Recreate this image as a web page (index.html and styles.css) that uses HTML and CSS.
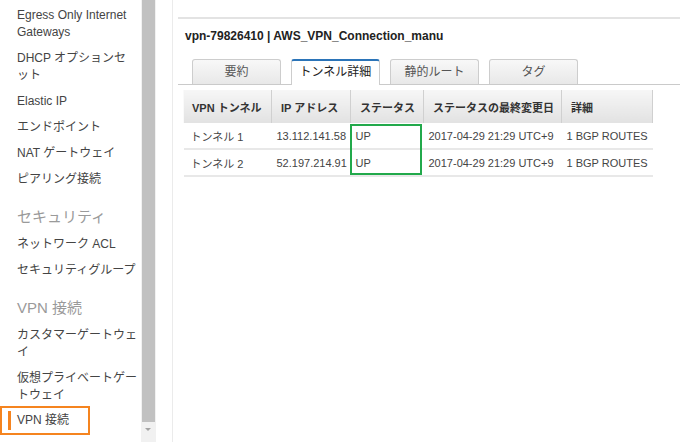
FILE: index.html
```html
<!DOCTYPE html>
<html>
<head>
  <title>VPN 接続</title>
  <link rel="stylesheet" href="styles.css">
</head>
<body>
  <div class="page">
    <aside class="sidebar">
      <nav class="side-nav">
        <div class="nav-item">Egress Only Internet Gateways</div>
        <div class="nav-item">DHCP オプションセット</div>
        <div class="nav-item">Elastic IP</div>
        <div class="nav-item">エンドポイント</div>
        <div class="nav-item">NAT ゲートウェイ</div>
        <div class="nav-item">ピアリング接続</div>

        <div class="nav-heading">セキュリティ</div>
        <div class="nav-item">ネットワーク ACL</div>
        <div class="nav-item">セキュリティグループ</div>

        <div class="nav-heading">VPN 接続</div>
        <div class="nav-item">カスタマーゲートウェイ</div>
        <div class="nav-item">仮想プライベートゲートウェイ</div>
        <div class="nav-item active"><span class="active-mark">VPN 接続</span></div>
      </nav>
      <div class="scrollbar">
        <div class="thumb"></div>
        <div class="arrow"></div>
      </div>
    </aside>

    <main class="content">
      <div class="top-line"></div>
      <div class="title">vpn-79826410 | AWS_VPN_Connection_manu</div>

      <div class="tabs">
        <div class="tab">要約</div>
        <div class="tab active">トンネル詳細</div>
        <div class="tab">静的ルート</div>
        <div class="tab">タグ</div>
      </div>

      <div class="table-wrap">
        <table class="tunnels">
          <colgroup>
            <col class="c-name">
            <col class="c-ip">
            <col class="c-status">
            <col class="c-date">
            <col class="c-detail">
          </colgroup>
          <thead>
            <tr>
              <th>VPN トンネル</th>
              <th>IP アドレス</th>
              <th>ステータス</th>
              <th>ステータスの最終変更日</th>
              <th>詳細</th>
            </tr>
          </thead>
          <tbody>
            <tr>
              <td>トンネル 1</td>
              <td>13.112.141.58</td>
              <td>UP</td>
              <td>2017-04-29 21:29 UTC+9</td>
              <td>1 BGP ROUTES</td>
            </tr>
            <tr>
              <td>トンネル 2</td>
              <td>52.197.214.91</td>
              <td>UP</td>
              <td>2017-04-29 21:29 UTC+9</td>
              <td>1 BGP ROUTES</td>
            </tr>
          </tbody>
        </table>
        <div class="status-box"></div>
      </div>
    </main>
  </div>
</body>
</html>
```

FILE: styles.css
```css
body {
  margin: 0;
  font-family: "Liberation Sans", Arial, "Noto Sans CJK JP", sans-serif;
  color: #444;
  background-color: #fff;
}

.page {
  display: flex;
  height: 442px;
  overflow: hidden;
}

/* left navigation */

.sidebar {
  display: flex;
  width: 156px;
  flex-shrink: 0;
}

.side-nav {
  width: 141px;
  box-sizing: border-box;
  padding: 7px 0 0 17px;
}

.nav-item {
  width: 120.5px;
  font-size: 12px;
  line-height: 17px;
  margin-bottom: 9px;
}

.nav-heading {
  font-size: 15px;
  line-height: 20px;
  color: #9a9a9a;
  padding-top: 10px;
  margin-bottom: 9px;
}

.nav-item.active {
  width: 90px;
  box-sizing: border-box;
  margin: -7px 0 0 -17px;
  padding: 3px 0;
  border: 2px solid #f5841f;
}

.active-mark {
  display: inline-block;
  margin-left: 6px;
  padding-left: 6px;
  border-left: 3px solid #f5841f;
  line-height: 19px;
}

.scrollbar {
  width: 15px;
  display: flex;
  flex-direction: column;
  background-color: #f1f1f1;
}

.thumb {
  height: 422px;
  margin: 0 1px 0 1px;
  background-color: #c1c1c1;
}

.arrow {
  align-self: center;
  margin-top: 6px;
  margin-right: 1px;
  width: 0;
  height: 0;
  border-left: 3px solid transparent;
  border-right: 3px solid transparent;
  border-top: 3px solid #a3a3a3;
}

/* main panel */

.content {
  flex: 1;
  margin-left: 16px;
  padding-left: 5px;
  border-left: 1px solid #ebebeb;
}

.top-line {
  height: 17px;
  border-bottom: 2px solid #e3e3e3;
}

.title {
  padding: 9px 0 0 7px;
  font-size: 12px;
  font-weight: bold;
  line-height: 16px;
  color: #222;
}

.tabs {
  display: flex;
  gap: 10px;
  margin-top: 15px;
  padding-left: 14px;
  border-bottom: 1px solid #cacaca;
}

.tab {
  width: 89px;
  height: 25px;
  box-sizing: border-box;
  border: 1px solid #cdcdcd;
  border-bottom: none;
  border-radius: 3px 3px 0 0;
  background: linear-gradient(#f8f8f8, #e8e8e8);
  text-align: center;
  font-size: 12px;
  line-height: 24px;
  color: #555;
}

.tab.active {
  height: 26px;
  margin-bottom: -1px;
  border-top: 2px solid #2b74b8;
  background: #fff;
  line-height: 23px;
  color: #222;
}

.table-wrap {
  position: relative;
  width: 469px;
  margin: 5px 0 0 5px;
}

.tunnels {
  width: 469px;
  border-collapse: collapse;
  table-layout: fixed;
  font-size: 11px;
}

.c-name { width: 88px; }
.c-ip { width: 79px; }
.c-status { width: 73px; }
.c-date { width: 138px; }
.c-detail { width: 91px; }

.tunnels th {
  height: 33px;
  padding: 0 0 0 9px;
  text-align: left;
  font-weight: bold;
  color: #333;
  white-space: nowrap;
  background: linear-gradient(#f6f6f6, #e2e2e2);
  border-right: 1px solid #d0d0d0;
  border-left: 1px solid #fafafa;
}

.tunnels th:first-child {
  padding-left: 8px;
}

.tunnels td {
  height: 25px;
  padding: 0 0 0 5px;
  white-space: nowrap;
  border-bottom: 2px solid #e8e8e8;
}

.tunnels td:first-child {
  padding-left: 7px;
}

.status-box {
  position: absolute;
  left: 167px;
  top: 34px;
  width: 72px;
  height: 51px;
  box-sizing: border-box;
  border: 2px solid #22a94b;
}
```
